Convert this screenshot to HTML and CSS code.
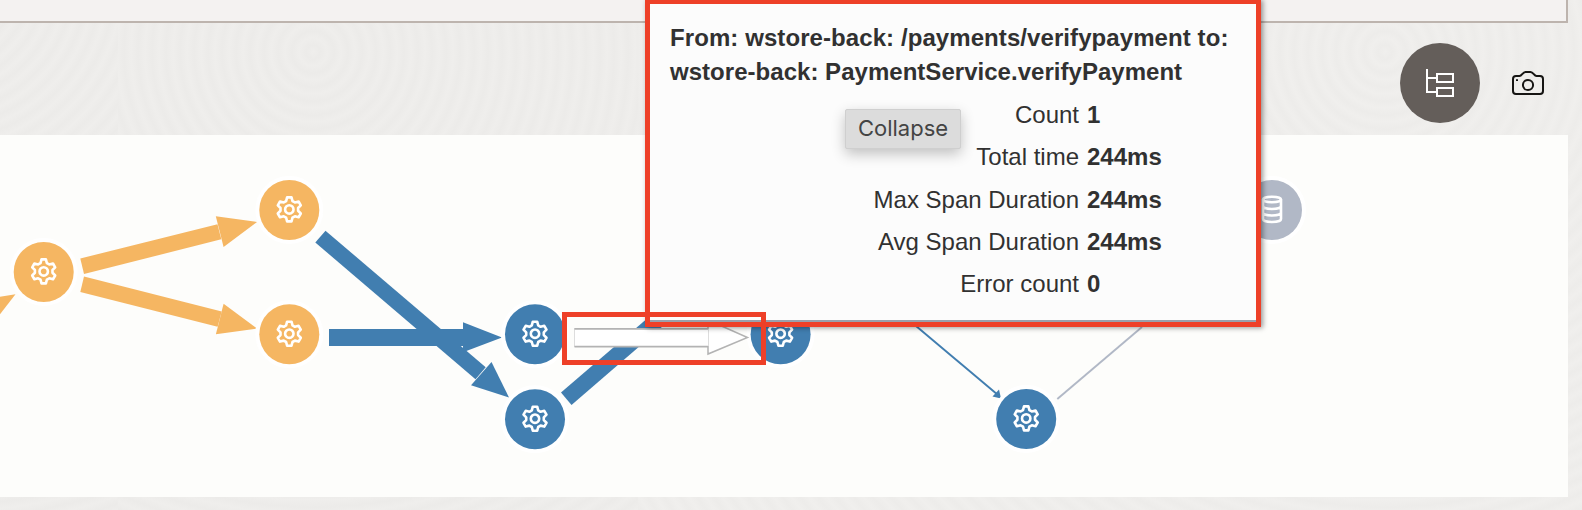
FILE: index.html
```html
<!DOCTYPE html>
<html lang="en">
<head>
<meta charset="utf-8">
<title>Trace topology</title>
<link rel="stylesheet" href="styles.css">
</head>
<body>
<div class="page">
  <div class="panel-end"></div>
  <div class="toolbar">
    <button class="tool tool-active" aria-label="Topology">
      <svg width="28" height="30" viewBox="0 0 28 30" fill="none" stroke="#fff" stroke-width="2"><path d="M1 1V24H11M1 10H11M11 6H27V14H11ZM11 20H27V28H11Z"/></svg>
    </button>
    <button class="tool" aria-label="Save image">
      <svg width="32" height="24" viewBox="0 0 32 24" fill="none" stroke="#161513" stroke-width="2"><path d="M4 5H7.500C10 5 10.500 1 13.500 1H18.500C21.500 1 22 5 24.500 5H28Q31 5 31 8V20Q31 23 28 23H4Q1 23 1 20V8Q1 5 4 5Z"/><circle cx="16" cy="14" r="5.100"/><path d="M4 9.200H6" stroke-width="1.800"/></svg>
    </button>
  </div>
  <div class="canvas">
    <svg class="graph" width="1568" height="362" viewBox="0 135 1568 362">
      <defs>
        <g id="gear" fill="none" stroke="#fff" stroke-width="2.600" stroke-linejoin="round">
          <path d="M-2.200-12H2.200L3.200-8.300L5.590-6.920L9.290-7.900L11.490-4.090L8.790-1.380V1.380L11.490 4.090L9.290 7.900L5.590 6.920L3.200 8.300L2.200 12H-2.200L-3.200 8.300L-5.590 6.920L-9.290 7.900L-11.490 4.090L-8.790 1.380V-1.380L-11.490-4.090L-9.290-7.900L-5.590-6.920L-3.200-8.300Z"/>
          <circle r="4.200"/>
        </g>
        <g id="node">
          <circle r="32" fill="none" stroke="#fff" stroke-width="4"/>
          <circle r="30"/>
          <use href="#gear" x="0" y="-.6"/>
        </g>
      </defs>
      <g class="orange">
        <path d="M0 296.700L15.500 294.300L0 314.300Z"/>
        <path d="M80.300 258.500L217.500 224.300L221.300 239.300L84 274Z"/>
        <path d="M215.800 216.300L257 222L223.600 247Z"/>
        <path d="M84 276.500L221.700 311.500L217.600 326.800L80.300 292Z"/>
        <path d="M223.600 303.800L257 328.600L215.900 334.200Z"/>
        <use href="#node" x="43.700" y="272"/>
        <use href="#node" x="289.300" y="210"/>
        <use href="#node" x="289.300" y="334.300"/>
      </g>
      <g class="blue">
        <path d="M325.500 230.700L485.700 367.300L475.500 379.200L315.300 242.500Z"/>
        <path d="M491.500 362L509 397.500L471 385.300Z"/>
        <path d="M329 329H463.200V346H329Z"/>
        <path d="M463 322.300L502 337.400L463 352.300Z"/>
        <path d="M561 392.500L646 319.500L670 320L571.500 405Z"/>
        <path d="M916 326L998 395" fill="none" stroke="#417eb0" stroke-width="1.900"/>
        <path d="M999 389.500L1001 398.500L992.500 396.500Z"/>
        <use href="#node" x="535" y="334.300"/>
        <use href="#node" x="535" y="419.300"/>
        <use href="#node" x="780.600" y="334.300"/>
        <use href="#node" x="1026.200" y="419"/>
      </g>
      <path d="M1057.300 399L1142 327" stroke="#b1b8c6" stroke-width="1.900"/>
      <g class="selected">
        <rect x="574.500" y="328.500" width="134" height="18.500" fill="#fff"/>
        <path d="M708 320L747.500 337.500L708 354Z" fill="#fff" stroke="#b3b3b3" stroke-width="1.500"/>
        <path d="M708.500 329V346" stroke="#fff" stroke-width="3"/>
        <path d="M708.500 329V346M574.500 328V347" stroke="#ddd"/>
        <path d="M574.500 328.800H708M574.500 346.700H708" stroke="#b3b3b3" stroke-width="1.800"/>
      </g>
      <g class="grey">
        <circle cx="1272" cy="210" r="32" fill="none" stroke="#fff" stroke-width="4"/>
        <circle cx="1272" cy="210" r="30"/>
        <g fill="none" stroke="#fff" stroke-width="2.600"><ellipse cx="1272" cy="199.500" rx="9" ry="2.800"/><path d="M1263 199.500V219C1263 223 1281 223 1281 219V199.500M1263 206C1263 210 1281 210 1281 206M1263 212.500C1263 216.500 1281 216.500 1281 212.500"/></g>
      </g>
    </svg>
  </div>
  <div class="popup">
    <div class="popup-body">
      <div class="popup-title"><span class="route-from">From: wstore-back: /payments/verifypayment to:</span><br><span class="route-to">wstore-back: PaymentService.verifyPayment</span></div>
      <dl class="stats">
        <dt>Count</dt><dd>1</dd>
        <dt>Total time</dt><dd>244ms</dd>
        <dt>Max Span Duration</dt><dd>244ms</dd>
        <dt>Avg Span Duration</dt><dd>244ms</dd>
        <dt>Error count</dt><dd>0</dd>
      </dl>
    </div>
  </div>
  <div class="hint">Collapse</div>
  <div class="highlight"></div>
</div>
</body>
</html>
```
FILE: styles.css
```css
* { box-sizing: border-box; }
body { margin: 0; font-family: "Liberation Sans", Arial, sans-serif; }
.page {
  position: relative;
  width: 1582px;
  height: 510px;
  overflow: hidden;
  background:
    repeating-radial-gradient(circle at 313px 52px, #efeeec 0, #ecebe9 7px, #efeeec 14px) 118px 0 / 520px 510px no-repeat,
    repeating-radial-gradient(circle at 1385px 52px, #f0efed 0, #edecea 7px, #f0efed 14px);
}
.page {
  background:
    repeating-radial-gradient(circle at 195px 52px, #efeeec 0, #ecebe9 7px, #efeeec 14px) 118px 0 / 520px 510px no-repeat,
    repeating-radial-gradient(circle at -60px -20px, #efeeec 0, #ecebe9 7px, #efeeec 14px) 0 0 / 118px 510px no-repeat,
    repeating-radial-gradient(circle at 1385px 52px, #f0efed 0, #edecea 7px, #f0efed 14px);
}
.page > div { position: relative; }
.panel-end {
  width: 1568px;
  height: 23px;
  background: #f4f2f1;
  border-right: 2px solid #bdb4ae;
  border-bottom: 2px solid #bdb4ae;
}
.toolbar {
  display: flex;
  justify-content: flex-end;
  align-items: center;
  gap: 8px;
  height: 112px;
  padding: 8px 14px 0 0;
}
.tool {
  display: flex;
  align-items: center;
  justify-content: center;
  width: 80px;
  height: 80px;
  padding: 0;
  border: 0;
  border-radius: 50%;
  background: transparent;
}
.tool-active { background: #645e5a; }
.canvas { width: 1568px; height: 362px; background: #fdfdfb; }
.graph { display: block; }
.orange { fill: #f5b662; }
.blue { fill: #417eb0; }
.grey { fill: #b1b8c6; }
.page > .popup {
  position: absolute;
  left: 645px;
  top: -1px;
  width: 616px;
  height: 328px;
  border: 5px solid #ee4028;
  background: #fcfcfc;
  box-shadow: 2px 1px 5px rgba(0,0,0,.4);
}
.popup-body {
  height: 318px;
  padding: 17px 0 0 20px;
  border-bottom: 2px solid #9aa0ac;
  color: #313131;
  font-size: 24px;
}
.popup-title { font-weight: bold; line-height: 34px; white-space: nowrap; }
.route-from { letter-spacing: .08px; }
.route-to { letter-spacing: .03px; }
.stats {
  display: grid;
  grid-template-columns: 409px 1fr;
  column-gap: 8px;
  grid-auto-rows: 42.300px;
  align-items: center;
  margin: 5px 0 0;
}
.stats dt { text-align: right; white-space: nowrap; }
.stats dd { margin: 0; font-weight: bold; }
.page > .hint {
  position: absolute;
  left: 845px;
  top: 109px;
  width: 116px;
  height: 40px;
  border: 1px solid #cfcfcf;
  border-radius: 2px;
  background: #dcdcdc;
  color: #444;
  font: 22px/37px Inter, sans-serif;
  text-align: center;
  box-shadow: 0 5px 14px rgba(0,0,0,.24);
}
.page > .highlight {
  position: absolute;
  left: 562px;
  top: 312px;
  width: 204px;
  height: 53px;
  border: 5px solid #ee4028;
}
```
